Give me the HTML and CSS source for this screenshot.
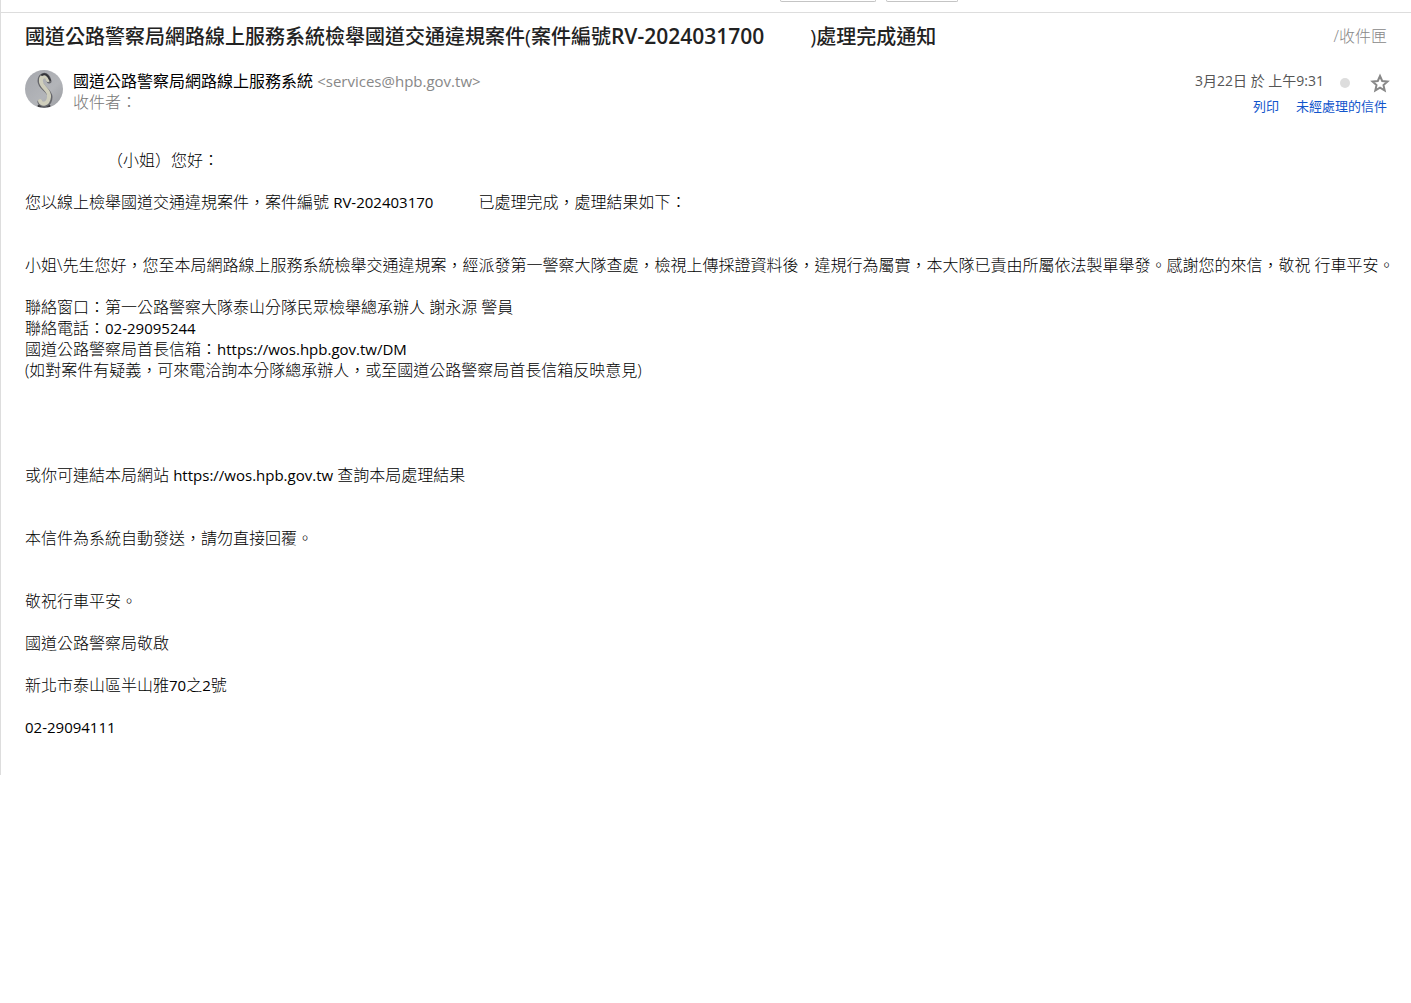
FILE: index.html
```html
<!DOCTYPE html>
<html lang="zh-TW">
<head>
  <meta charset="UTF-8">
  <meta name="viewport" content="width=device-width, initial-scale=1.0">
  <title>處理完成通知</title>
  <link rel="stylesheet" href="styles.css">
</head>
<body>
  <div class="mail">
    <!-- Toolbar, scrolled almost out of view -->
    <div class="toolbar">
      <button class="tool tool-wide" type="button" aria-label="動作"></button>
      <button class="tool" type="button" aria-label="更多"></button>
    </div>

    <!-- Subject -->
    <header class="subject">
      <h1>國道公路警察局網路線上服務系統檢舉國道交通違規案件(案件編號<span class="case-no">RV-2024031700</span><span class="case-gap"></span>)處理完成通知</h1>
      <span class="folder">/收件匣</span>
    </header>

    <!-- Sender -->
    <div class="sender">
      <svg class="avatar" viewBox="0 0 38 38" aria-hidden="true">
        <defs>
          <clipPath id="round"><circle cx="19" cy="19" r="19"/></clipPath>
          <linearGradient id="wall" x1="0" y1="0" x2="1" y2="1">
            <stop offset="0" stop-color="#a5a7ad"/>
            <stop offset="0.6" stop-color="#b3b5b9"/>
            <stop offset="1" stop-color="#999ba0"/>
          </linearGradient>
        </defs>
        <g clip-path="url(#round)" fill="none" stroke-linecap="round">
          <rect width="38" height="38" fill="url(#wall)"/>
          <path d="M14 36h10" stroke="#3c3c40" stroke-width="3"/>
          <path d="M24 11C22 3 15 4 15 11c0 7 10 9 10 16 0 8-8 10-10 5" stroke="#66676c" stroke-width="5"/>
          <path d="M23 10c-2-6-8-4-7 2 1 6 9 8 8 15-1 8-7 8-9 4" stroke="#cfcebc" stroke-width="4"/>
          <path d="M17 5c3-2 6 0 8 5" stroke="#333439" stroke-width="2"/>
        </g>
      </svg>
      <div class="from">
        <div><span class="name">國道公路警察局網路線上服務系統</span> <span class="address">&lt;services@hpb.gov.tw&gt;</span></div>
        <div class="to">收件者：</div>
      </div>
      <div class="meta">
        <div class="date-row">
          <span>3月22日 於 上午9:31</span>
          <span class="dot"></span>
          <button class="star" type="button" aria-label="加上星號">
            <svg viewBox="0 0 20 20" aria-hidden="true">
              <path d="M10 3l2.200 5 5.300.500-4 3.600 1.200 5.300L10 14.600l-4.700 2.800 1.200-5.300-4-3.600L7.800 8z" fill="none" stroke="#888" stroke-width="2"/>
            </svg>
          </button>
        </div>
        <div class="links">
          <a href="#">列印</a>
          <a href="#">未經處理的信件</a>
        </div>
      </div>
    </div>

    <!-- Message -->
    <main class="message">
      <p><span class="name-gap"></span>（小姐）您好：</p>
      <p class="wide">您以線上檢舉國道交通違規案件，案件編號 <span class="latin">RV-202403170</span><span class="body-gap"></span>已處理完成，處理結果如下：</p>
      <p>小姐\先生您好，您至本局網路線上服務系統檢舉交通違規案，經派發第一警察大隊查處，檢視上傳採證資料後，違規行為屬實，本大隊已責由所屬依法製單舉發。感謝您的來信，敬祝 行車平安。</p>
      <p class="contact">
        聯絡窗口：第一公路警察大隊泰山分隊民眾檢舉總承辦人 謝永源 警員<br>
        聯絡電話：<span class="latin">02-29095244</span><br>
        國道公路警察局首長信箱：<span class="latin">https://wos.hpb.gov.tw/DM</span><br>
        (如對案件有疑義，可來電洽詢本分隊總承辦人，或至國道公路警察局首長信箱反映意見)
      </p>
      <p class="wide">或你可連結本局網站 <span class="latin">https://wos.hpb.gov.tw</span> 查詢本局處理結果</p>
      <p class="wide">本信件為系統自動發送，請勿直接回覆。</p>
      <p>敬祝行車平安。</p>
      <p>國道公路警察局敬啟</p>
      <p>新北市泰山區半山雅<span class="latin">70</span>之<span class="latin">2</span>號</p>
      <p><span class="latin">02-29094111</span></p>
    </main>
  </div>
</body>
</html>
```

FILE: styles.css
```css
* {
  box-sizing: border-box;
}

body {
  margin: 0;
  background: #fff;
  color: #000;
  font-family: "Open Sans", "Noto Sans CJK TC", sans-serif;
  font-size: 16px;
  line-height: 21px;
}

.mail {
  border-left: 1px solid #ddd;
  padding-bottom: 16px;
}

/* Toolbar */
.toolbar {
  display: flex;
  gap: 10px;
  height: 13px;
  padding-left: 779px;
  border-bottom: 1px solid #ddd;
}

.tool {
  width: 72px;
  height: 2px;
  padding: 0;
  border: 1px solid #c4c4c4;
  border-top: none;
  border-radius: 0 0 2px 2px;
  background: #fff;
}

.tool-wide {
  width: 96px;
}

/* Subject */
.subject {
  display: flex;
  justify-content: space-between;
  align-items: center;
  height: 46px;
  padding: 0 24px;
}

h1 {
  margin: 0;
  color: #222;
  font-size: 20px;
  font-weight: 500;
  line-height: 28px;
  white-space: nowrap;
}

.case-no {
  font-size: 21px;
  font-weight: 600;
}

.case-gap {
  display: inline-block;
  width: 46px;
}

.folder {
  color: #888;
  font-weight: 300;
}

/* Sender */
.sender {
  display: flex;
  align-items: flex-start;
  padding: 11px 24px 0;
}

.avatar {
  width: 38px;
  height: 38px;
  margin-right: 10px;
}

.from {
  flex: 1;
  padding-top: 1px;
}

.name {
  font-weight: 400;
}

.address {
  color: #888;
  font-size: 15px;
}

.to {
  color: #777;
  font-weight: 300;
}

.meta {
  color: #555;
  font-size: 14px;
}

.date-row {
  display: flex;
  justify-content: flex-end;
  height: 26px;
}

.dot {
  width: 10px;
  height: 10px;
  margin: 8px 20px 0 16px;
  border-radius: 50%;
  background: #ddd;
}

.star {
  width: 20px;
  height: 20px;
  margin: 3px -3px 0 0;
  padding: 0;
  border: none;
  background: none;
}

.star svg {
  display: block;
}

.links {
  display: flex;
  justify-content: flex-end;
  gap: 17px;
  font-size: 13px;
}

.links a {
  color: #15c;
  text-decoration: none;
}

/* Message */
.message {
  padding: 33px 24px 0;
  font-weight: 300;
  white-space: nowrap;
}

.message p {
  margin: 0 0 21px;
}

.message .wide {
  margin-bottom: 42px;
}

.message .contact {
  margin-bottom: 84px;
}

.latin {
  font-size: 15px;
  font-weight: 400;
}

.name-gap {
  display: inline-block;
  width: 82px;
}

.body-gap {
  display: inline-block;
  width: 45px;
}
```
